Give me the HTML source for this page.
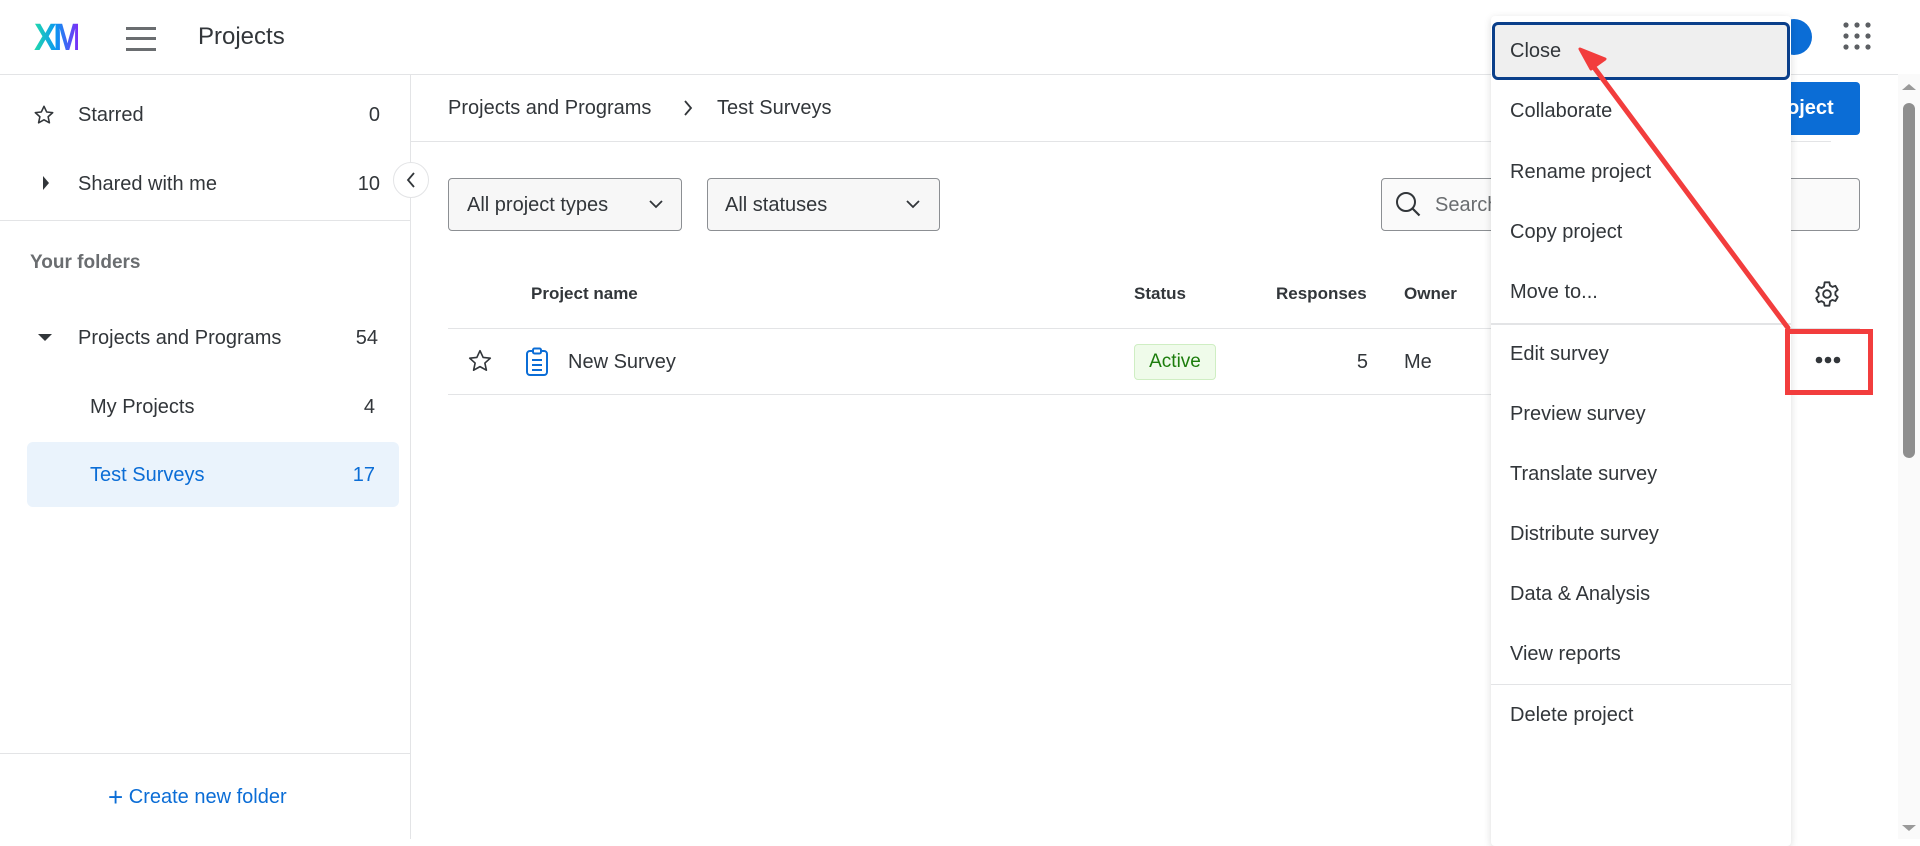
<!DOCTYPE html>
<html><head><meta charset="utf-8"><style>
*{box-sizing:border-box;margin:0;padding:0}
body{width:1920px;height:839px;overflow:hidden;background:#fff;font-family:"Liberation Sans",Arial,sans-serif;color:#32363a;position:relative}
.a{position:absolute;white-space:nowrap}
.t{font-size:20px;line-height:24px}
.hl{position:absolute;height:1px;background:#e3e4e6}
.mi{position:absolute;left:1510px;font-size:20px;line-height:24px;color:#32363a}
</style></head><body>
<!-- header -->
<div class="a" style="left:34px;top:20px;font-size:38px;font-weight:bold;letter-spacing:-4px;line-height:36px;background:linear-gradient(90deg,#21dbaa,#0b96f2 50%,#7b2ff7);-webkit-background-clip:text;color:transparent;transform:scaleX(0.9);transform-origin:left">XM</div>
<div class="a" style="left:126px;top:27px;width:30px;height:3px;background:#6a6d70;box-shadow:0 10px 0 #6a6d70,0 21px 0 #6a6d70"></div>
<div class="a" style="left:198px;top:23px;font-size:24px;line-height:28px">Projects</div>
<div class="hl" style="left:0;top:74px;width:1920px"></div>
<div class="a" style="left:1776px;top:19px;width:36px;height:36px;border-radius:50%;background:#0b6dd6"></div>
<svg class="a" style="left:1843px;top:22px" width="28" height="30"><g fill="#5c5f63"><circle cx="3" cy="3" r="2.6"/><circle cx="14" cy="3" r="2.6"/><circle cx="25" cy="3" r="2.6"/><circle cx="3" cy="14" r="2.6"/><circle cx="14" cy="14" r="2.6"/><circle cx="25" cy="14" r="2.6"/><circle cx="3" cy="25" r="2.6"/><circle cx="14" cy="25" r="2.6"/><circle cx="25" cy="25" r="2.6"/></g></svg>
<!-- sidebar -->
<div class="a" style="left:410px;top:74px;width:1px;height:765px;background:#e3e4e6"></div>
<svg class="a" style="left:33px;top:104px" width="22" height="22" viewBox="0 0 24 24"><path d="M12 2.5l2.9 6.2 6.6.7-5 4.5 1.4 6.6L12 17.2l-5.9 3.3 1.4-6.6-5-4.5 6.6-.7z" fill="none" stroke="#32363a" stroke-width="1.7" stroke-linejoin="round"/></svg>
<div class="a t" style="left:78px;top:103px">Starred</div><div class="a t" style="right:1540px;top:103px">0</div>
<div class="a" style="left:43px;top:176px;border-left:6px solid #32363a;border-top:7px solid transparent;border-bottom:7px solid transparent"></div>
<div class="a t" style="left:78px;top:172px">Shared with me</div><div class="a t" style="right:1540px;top:172px">10</div>
<div class="a" style="left:393px;top:162px;width:36px;height:36px;border-radius:50%;background:#fff;border:1px solid #e3e4e6"></div>
<svg class="a" style="left:404px;top:171px" width="14" height="18"><path d="M10 2L4 9l6 7" fill="none" stroke="#32363a" stroke-width="1.8"/></svg>
<div class="hl" style="left:0;top:220px;width:411px"></div>
<div class="a" style="left:30px;top:251px;font-size:19px;line-height:24px;font-weight:bold;color:#6a6d70">Your folders</div>
<div class="a" style="left:38px;top:334px;border-top:7px solid #32363a;border-left:7px solid transparent;border-right:7px solid transparent"></div>
<div class="a t" style="left:78px;top:326px">Projects and Programs</div><div class="a t" style="right:1542px;top:326px">54</div>
<div class="a t" style="left:90px;top:395px">My Projects</div><div class="a t" style="right:1545px;top:395px">4</div>
<div class="a" style="left:27px;top:442px;width:372px;height:65px;background:#eaf3fc;border-radius:6px"></div>
<div class="a t" style="left:90px;top:463px;color:#0b6dd6">Test Surveys</div><div class="a t" style="right:1545px;top:463px;color:#0b6dd6">17</div>
<div class="hl" style="left:0;top:753px;width:411px"></div>
<div class="a t" style="left:108px;top:785px;color:#0b6dd6"><span style="font-size:26px;vertical-align:-3px">+</span> Create new folder</div>
<!-- main -->
<div class="a t" style="left:448px;top:96px">Projects and Programs</div>
<svg class="a" style="left:682px;top:99px" width="12" height="18"><path d="M3 2l6 7-6 7" fill="none" stroke="#32363a" stroke-width="1.8"/></svg>
<div class="a t" style="left:717px;top:96px">Test Surveys</div>
<div class="a" style="left:1763px;top:82px;width:97px;height:53px;background:#0b6dd6;border-radius:4px"></div>
<div class="a" style="left:1787px;top:96px;color:#fff;font-size:20px;font-weight:bold;line-height:24px">oject</div>
<div class="hl" style="left:411px;top:141px;width:1420px"></div>
<div class="a" style="left:448px;top:178px;width:234px;height:53px;border:1px solid #8c8f93;border-radius:4px;background:#f7f7f7"></div>
<div class="a t" style="left:467px;top:193px">All project types</div>
<svg class="a" style="left:648px;top:198px" width="16" height="12"><path d="M2 3l6 6 6-6" fill="none" stroke="#32363a" stroke-width="1.8"/></svg>
<div class="a" style="left:707px;top:178px;width:233px;height:53px;border:1px solid #8c8f93;border-radius:4px;background:#f7f7f7"></div>
<div class="a t" style="left:725px;top:193px">All statuses</div>
<svg class="a" style="left:905px;top:198px" width="16" height="12"><path d="M2 3l6 6 6-6" fill="none" stroke="#32363a" stroke-width="1.8"/></svg>
<div class="a" style="left:1381px;top:178px;width:479px;height:53px;border:1px solid #8c8f93;border-radius:4px;background:#fafafa"></div>
<svg class="a" style="left:1394px;top:190px" width="30" height="30"><circle cx="12" cy="12" r="9" fill="none" stroke="#32363a" stroke-width="2"/><path d="M18.5 18.5l7 7" stroke="#32363a" stroke-width="2.2"/></svg>
<div class="a t" style="left:1435px;top:193px;color:#6a6d70">Search</div>
<div class="a" style="left:531px;top:284px;font-size:17px;font-weight:bold">Project name</div>
<div class="a" style="left:1134px;top:284px;font-size:17px;font-weight:bold">Status</div>
<div class="a" style="left:1276px;top:284px;font-size:17px;font-weight:bold">Responses</div>
<div class="a" style="left:1404px;top:284px;font-size:17px;font-weight:bold">Owner</div>
<svg class="a" style="left:1813px;top:280px" width="28" height="28" viewBox="0 0 24 24"><path d="M10 2h4l.6 2.7 2 1.2 2.6-.9 2 3.4-2 1.9v2.4l2 1.9-2 3.4-2.6-.9-2 1.2L14 22h-4l-.6-2.7-2-1.2-2.6.9-2-3.4 2-1.9V11.3l-2-1.9 2-3.4 2.6.9 2-1.2z" fill="none" stroke="#32363a" stroke-width="1.6" stroke-linejoin="round"/><circle cx="12" cy="12" r="3.3" fill="none" stroke="#32363a" stroke-width="1.6"/></svg>
<div class="hl" style="left:448px;top:328px;width:1412px"></div>
<div class="hl" style="left:448px;top:394px;width:1412px"></div>
<svg class="a" style="left:467px;top:348px" width="26" height="26" viewBox="0 0 24 24"><path d="M12 2.5l2.9 6.2 6.6.7-5 4.5 1.4 6.6L12 17.2l-5.9 3.3 1.4-6.6-5-4.5 6.6-.7z" fill="none" stroke="#32363a" stroke-width="1.5" stroke-linejoin="round"/></svg>
<svg class="a" style="left:524px;top:347px" width="26" height="30" viewBox="0 0 26 30"><rect x="3" y="4" width="20" height="24" rx="3" fill="none" stroke="#0b6dd6" stroke-width="2"/><rect x="9" y="1.5" width="8" height="5" rx="1.5" fill="#fff" stroke="#0b6dd6" stroke-width="2"/><path d="M8 13h10M8 18h10M8 23h10" stroke="#0b6dd6" stroke-width="2"/></svg>
<div class="a t" style="left:568px;top:350px">New Survey</div>
<div class="a" style="left:1134px;top:344px;width:82px;height:36px;background:#effbea;border:1px solid #cfeec3;border-radius:4px;color:#1c7d0c;font-size:19px;line-height:34px;text-align:center">Active</div>
<div class="a t" style="right:552px;top:350px">5</div>
<div class="a t" style="left:1404px;top:350px">Me</div>
<svg class="a" style="left:1814px;top:355px" width="28" height="10"><g fill="#32363a"><circle cx="5" cy="5" r="3.3"/><circle cx="14" cy="5" r="3.3"/><circle cx="23" cy="5" r="3.3"/></g></svg>
<!-- scrollbar -->
<div class="a" style="left:1898px;top:74px;width:22px;height:765px;background:#fafafa"></div>
<div class="a" style="left:1902px;top:84px;border-bottom:6px solid #9a9a9a;border-left:7px solid transparent;border-right:7px solid transparent"></div>
<div class="a" style="left:1903px;top:103px;width:12px;height:355px;border-radius:6px;background:#8e8e8e"></div>
<div class="a" style="left:1902px;top:825px;border-top:6px solid #9a9a9a;border-left:7px solid transparent;border-right:7px solid transparent"></div>
<!-- menu -->
<div class="a" style="left:1491px;top:16px;width:300px;height:830px;background:#fff;box-shadow:0 2px 8px rgba(0,0,0,.14);border-radius:4px"></div>
<div class="a" style="left:1492px;top:22px;width:298px;height:58px;background:#efefef;border:3px solid #0a3f8a;border-radius:6px"></div>
<div class="mi" style="top:39px">Close</div>
<div class="mi" style="top:99px">Collaborate</div>
<div class="mi" style="top:160px">Rename project</div>
<div class="mi" style="top:220px">Copy project</div>
<div class="mi" style="top:280px">Move to...</div>
<div class="hl" style="left:1491px;top:323px;width:300px;height:2px"></div>
<div class="mi" style="top:342px">Edit survey</div>
<div class="mi" style="top:402px">Preview survey</div>
<div class="mi" style="top:462px">Translate survey</div>
<div class="mi" style="top:522px">Distribute survey</div>
<div class="mi" style="top:582px">Data &amp; Analysis</div>
<div class="mi" style="top:642px">View reports</div>
<div class="hl" style="left:1491px;top:684px;width:300px"></div>
<div class="mi" style="top:703px">Delete project</div>
<!-- red box + arrow on top -->
<div class="a" style="left:1785px;top:329px;width:88px;height:66px;border:5px solid #f23d3d"></div>
<svg class="a" style="left:0;top:0" width="1920" height="839"><line x1="1788" y1="328" x2="1593" y2="66" stroke="#f23d3d" stroke-width="5" stroke-linecap="round"/><path d="M1580 49l25 10-14 10z" fill="#f23d3d" stroke="#f23d3d" stroke-width="3" stroke-linejoin="round"/></svg>
</body></html>
